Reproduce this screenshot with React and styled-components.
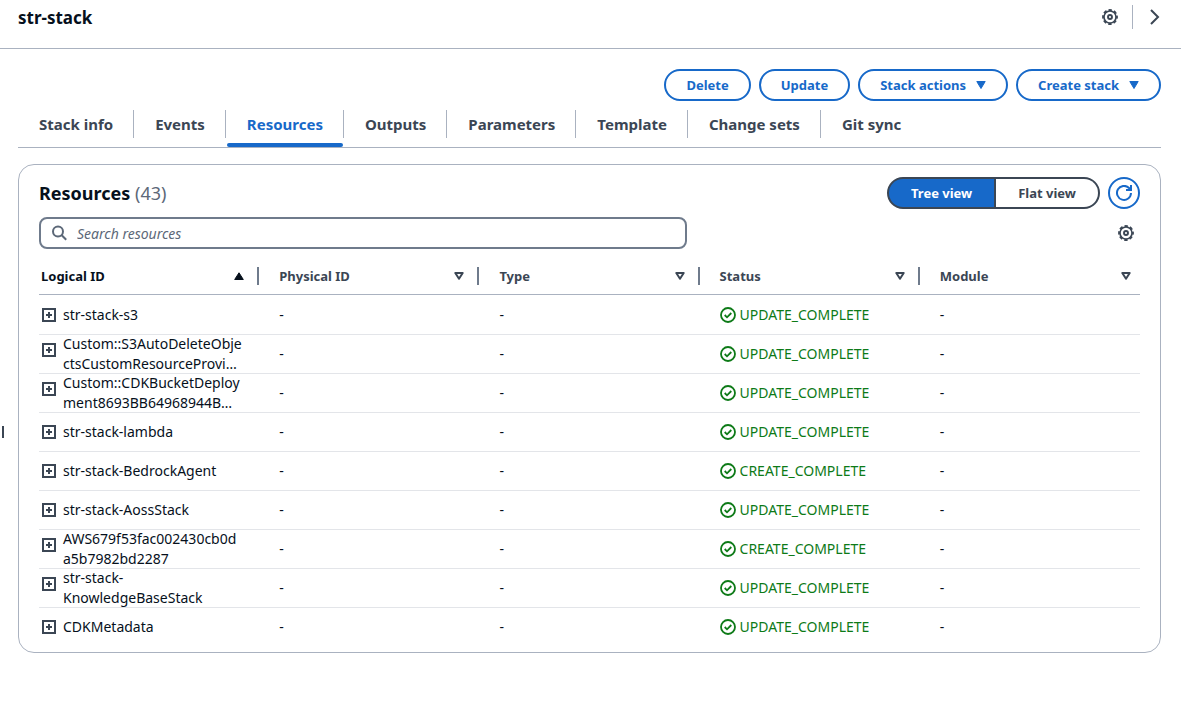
import { useState } from "react";
import styled, { createGlobalStyle } from "styled-components";

const Theme = {
  text: "#06101c",
  muted: "#3b4654",
  counter: "#5c6878",
  line: "#aab2c0",
  rowLine: "#e3e5e9",
  control: "#6f7b8c",
  blue: "#1769c9",
  green: "#0d7a17",
};

const GlobalStyle = createGlobalStyle`
  * {
    box-sizing: border-box;
  }

  body {
    margin: 0;
    background-color: #fff;
    color: ${Theme.text};
    font-family: "Noto Sans", "Open Sans", sans-serif;
    font-size: 14px;
    line-height: 20px;
  }

  button,
  input {
    font-family: inherit;
  }

  svg {
    display: block;
    flex-shrink: 0;
  }
`;

const TopBar = styled.header`
  display: flex;
  align-items: flex-start;
  justify-content: space-between;
  padding: 5px 18px 17px;
  border-bottom: 1px solid ${Theme.line};
`;

const StackName = styled.h1`
  margin: 0;
  font-size: 17px;
  font-weight: 700;
  line-height: 26px;
`;

const TopActions = styled.div`
  display: flex;
  align-items: center;
  gap: 14px;
`;

const TopDivider = styled.span`
  width: 1px;
  height: 24px;
  background-color: ${Theme.line};
`;

const IconButton = styled.button`
  display: flex;
  padding: 0;
  border: 0;
  background: none;
  color: ${Theme.muted};
  cursor: pointer;
`;

const PanelHandle = styled.span`
  position: fixed;
  top: 426px;
  left: 2px;
  width: 2px;
  height: 12px;
  background-color: ${Theme.muted};
`;

const Main = styled.main`
  padding: 20px 20px 20px 18px;
`;

const ButtonRow = styled.div`
  display: flex;
  justify-content: flex-end;
  gap: 8px;
`;

const Button = styled.button`
  display: flex;
  align-items: center;
  gap: 10px;
  height: 32px;
  padding: 0 20px;
  border: 2px solid ${Theme.blue};
  border-radius: 20px;
  background-color: #fff;
  color: ${Theme.blue};
  font-size: 13px;
  font-weight: 700;
  cursor: pointer;
`;

const Tabs = styled.div`
  display: flex;
  border-bottom: 1px solid ${Theme.line};
`;

const TabItem = styled.div`
  display: flex;
  align-items: center;

  & + &::before {
    content: "";
    width: 1px;
    height: 28px;
    background-color: ${Theme.line};
  }
`;

const Tab = styled.button`
  display: flex;
  flex-direction: column;
  height: 46px;
  padding: 0 0 0 1px;
  border: 0;
  background: none;
  color: ${({ $active }) => ($active ? Theme.blue : Theme.muted)};
  font-size: 15px;
  font-weight: 700;
  line-height: 20px;
  cursor: pointer;

  &::after {
    content: "";
    width: 100%;
    height: 4px;
    border-radius: 2px;
    background-color: ${({ $active }) => ($active ? Theme.blue : "transparent")};
  }
`;

const TabLabel = styled.span`
  flex: 1;
  padding: 13px 20px 0;
`;

const Panel = styled.section`
  margin-top: 16px;
  padding: 12px 20px 6px;
  border: 1px solid ${Theme.line};
  border-radius: 16px;
`;

const PanelHeader = styled.div`
  display: flex;
  align-items: center;
  justify-content: space-between;
`;

const PanelTitle = styled.h2`
  margin: 0;
  font-size: 18px;
  font-weight: 700;
  line-height: 24px;
`;

const Counter = styled.span`
  color: ${Theme.counter};
  font-weight: 400;
`;

const PanelActions = styled.div`
  display: flex;
  gap: 8px;
`;

const Segments = styled.div`
  display: flex;
  height: 32px;
  overflow: hidden;
  border: 2px solid ${Theme.muted};
  border-radius: 16px;
  background-color: ${Theme.muted};
`;

const Segment = styled.button`
  padding: 0 22px;
  border: 0;
  background-color: ${({ $active }) => ($active ? Theme.blue : "#fff")};
  color: ${({ $active }) => ($active ? "#fff" : Theme.muted)};
  font-size: 13px;
  font-weight: 700;
  cursor: pointer;

  & + & {
    border-left: 2px solid ${Theme.muted};
  }
`;

const RefreshButton = styled(IconButton)`
  align-items: center;
  justify-content: center;
  width: 32px;
  height: 32px;
  border: 2px solid ${Theme.blue};
  border-radius: 50%;
  color: ${Theme.blue};
`;

const Toolbar = styled.div`
  display: flex;
  align-items: center;
  justify-content: space-between;
  margin-top: 8px;
  padding-right: 6px;
`;

const SearchBox = styled.label`
  display: flex;
  flex: 0 1 648px;
  align-items: center;
  gap: 10px;
  height: 32px;
  padding: 0 10px;
  border: 2px solid ${Theme.control};
  border-radius: 8px;
  color: ${Theme.counter};
`;

const SearchInput = styled.input`
  flex: 1;
  min-width: 0;
  padding: 0;
  border: 0;
  outline: 0;
  background: none;
  color: ${Theme.text};
  font-size: 14px;

  &::placeholder {
    color: ${Theme.counter};
    font-style: italic;
    opacity: 1;
  }
`;

const Table = styled.table`
  width: 100%;
  margin-top: 8px;
  border-spacing: 0;
  table-layout: fixed;
`;

const HeadCell = styled.th`
  height: 38px;
  padding: 0 0 0 20px;
  border-bottom: 1px solid ${Theme.line};
  color: ${({ $sorted }) => ($sorted ? Theme.text : Theme.muted)};
  font-size: 13px;
  font-weight: 700;
  text-align: left;

  &:first-child {
    padding-left: 2px;
  }

  &:last-child {
    padding-right: 9px;
  }
`;

const HeadContent = styled.div`
  display: flex;
  align-items: center;
  gap: 13px;
`;

const HeadLabel = styled.span`
  flex: 1;
`;

const ColumnDivider = styled.span`
  width: 2px;
  height: 18px;
  background-color: ${Theme.control};
`;

const Row = styled.tr`
  &:first-child td {
    padding-top: 1px;
  }

  &:last-child td {
    border-bottom: 0;
  }
`;

const Cell = styled.td`
  padding: 0 0 0 20px;
  border-bottom: 1px solid ${Theme.rowLine};

  &:first-child {
    padding-left: 3px;
  }
`;

const StatusCell = styled(Cell)`
  color: ${Theme.green};
`;

const CellContent = styled.div`
  display: flex;
  align-items: center;
  gap: ${({ $gap }) => $gap}px;
  height: 38px;
`;

const ExpandButton = styled(IconButton)`
  align-items: center;
  align-self: ${({ $wrapped }) => ($wrapped ? "flex-start" : "center")};
  height: ${({ $wrapped }) => ($wrapped ? 30 : 20)}px;
`;

const LogicalId = styled.span`
  white-space: pre;
`;

const SettingsIcon = () => (
  <svg width="16" height="16" viewBox="0 0 16 16" fill="none" stroke="currentColor">
    <circle cx="8" cy="8" r="7" strokeWidth="1.800" strokeDasharray="3.400 2.098" strokeDashoffset="1.700" />
    <circle cx="8" cy="8" r="6" strokeWidth="1.600" />
    <circle cx="8" cy="8" r="2" strokeWidth="1.900" />
  </svg>
);

const ChevronIcon = () => (
  <svg width="16" height="16" viewBox="0 0 16 16" fill="none" stroke="currentColor" strokeWidth="2">
    <path d="M4 1l7 7-7 7" />
  </svg>
);

const CaretIcon = () => (
  <svg width="10" height="8" viewBox="0 0 10 8" fill="currentColor">
    <path d="M.8.500h8.400L5 7.500z" stroke="currentColor" strokeLinejoin="round" />
  </svg>
);

const RefreshIcon = () => (
  <svg width="16" height="16" viewBox="0 0 16 16" fill="none" stroke="currentColor" strokeWidth="2">
    <path d="M15 8a7 7 0 1 1-2-5l2 2" />
    <path d="M15 0v5h-5" />
  </svg>
);

const SearchIcon = () => (
  <svg width="16" height="16" viewBox="0 0 16 16" fill="none" stroke="currentColor" strokeWidth="2">
    <circle cx="7" cy="6.500" r="5" />
    <path d="M10.500 10l4.700 4.700" />
  </svg>
);

const SortIcon = ({ filled }) => (
  <svg width="10" height="8" viewBox="0 0 10 8" fill="none" stroke="currentColor">
    {filled ? (
      <path d="M5 .8L9.300 7.500H.7z" fill="currentColor" strokeLinejoin="round" />
    ) : (
      <path d="M1.300 1h7.400L5 6.700z" strokeWidth="2" strokeLinejoin="round" />
    )}
  </svg>
);

const ExpandIcon = () => (
  <svg width="14" height="14" viewBox="0 0 14 14" fill="none" stroke="currentColor" strokeWidth="2">
    <rect x="1" y="1" width="12" height="12" />
    <path d="M7 4v6M4 7h6" />
  </svg>
);

const SuccessIcon = () => (
  <svg width="16" height="16" viewBox="0 0 16 16" fill="none" stroke="currentColor" strokeWidth="1.800">
    <circle cx="8" cy="8" r="7" />
    <path d="M4.700 8l2.300 2.300 4.300-4.300" />
  </svg>
);

const tabs = [
  "Stack info",
  "Events",
  "Resources",
  "Outputs",
  "Parameters",
  "Template",
  "Change sets",
  "Git sync",
];

const columns = ["Logical ID", "Physical ID", "Type", "Status", "Module"];

const resources = [
  { id: "str-stack-s3", status: "UPDATE_COMPLETE" },
  { id: "Custom::S3AutoDeleteObje\nctsCustomResourceProvi…", status: "UPDATE_COMPLETE" },
  { id: "Custom::CDKBucketDeploy\nment8693BB64968944B…", status: "UPDATE_COMPLETE" },
  { id: "str-stack-lambda", status: "UPDATE_COMPLETE" },
  { id: "str-stack-BedrockAgent", status: "CREATE_COMPLETE" },
  { id: "str-stack-AossStack", status: "UPDATE_COMPLETE" },
  { id: "AWS679f53fac002430cb0d\na5b7982bd2287", status: "CREATE_COMPLETE" },
  { id: "str-stack-\nKnowledgeBaseStack", status: "UPDATE_COMPLETE" },
  { id: "CDKMetadata", status: "UPDATE_COMPLETE" },
];

const ResourceRow = ({ resource }) => (
  <Row>
    <Cell>
      <CellContent $gap={7}>
        <ExpandButton $wrapped={resource.id.includes("\n")} aria-label="Expand">
          <ExpandIcon />
        </ExpandButton>
        <LogicalId>{resource.id}</LogicalId>
      </CellContent>
    </Cell>
    <Cell>-</Cell>
    <Cell>-</Cell>
    <StatusCell>
      <CellContent $gap={4}>
        <SuccessIcon />
        {resource.status}
      </CellContent>
    </StatusCell>
    <Cell>-</Cell>
  </Row>
);

export default function App() {
  const [activeTab, setActiveTab] = useState("Resources");
  const [view, setView] = useState("Tree view");

  return (
    <>
      <GlobalStyle />
      <TopBar>
        <StackName>str-stack</StackName>
        <TopActions>
          <IconButton aria-label="Preferences">
            <SettingsIcon />
          </IconButton>
          <TopDivider />
          <IconButton aria-label="Close panel">
            <ChevronIcon />
          </IconButton>
        </TopActions>
      </TopBar>
      <PanelHandle />
      <Main>
        <ButtonRow>
          <Button>Delete</Button>
          <Button>Update</Button>
          <Button>
            Stack actions <CaretIcon />
          </Button>
          <Button>
            Create stack <CaretIcon />
          </Button>
        </ButtonRow>
        <Tabs role="tablist">
          {tabs.map((tab) => (
            <TabItem key={tab} role="presentation">
              <Tab
                role="tab"
                aria-selected={tab === activeTab}
                $active={tab === activeTab}
                onClick={() => setActiveTab(tab)}
              >
                <TabLabel>{tab}</TabLabel>
              </Tab>
            </TabItem>
          ))}
        </Tabs>
        <Panel>
          <PanelHeader>
            <PanelTitle>
              Resources <Counter>(43)</Counter>
            </PanelTitle>
            <PanelActions>
              <Segments>
                {["Tree view", "Flat view"].map((name) => (
                  <Segment key={name} $active={name === view} onClick={() => setView(name)}>
                    {name}
                  </Segment>
                ))}
              </Segments>
              <RefreshButton aria-label="Refresh">
                <RefreshIcon />
              </RefreshButton>
            </PanelActions>
          </PanelHeader>
          <Toolbar>
            <SearchBox>
              <SearchIcon />
              <SearchInput placeholder="Search resources" aria-label="Search resources" />
            </SearchBox>
            <IconButton aria-label="Table settings">
              <SettingsIcon />
            </IconButton>
          </Toolbar>
          <Table>
            <thead>
              <tr>
                {columns.map((column, i) => (
                  <HeadCell key={column} $sorted={i === 0}>
                    <HeadContent>
                      <HeadLabel>{column}</HeadLabel>
                      <SortIcon filled={i === 0} />
                      {i < columns.length - 1 && <ColumnDivider />}
                    </HeadContent>
                  </HeadCell>
                ))}
              </tr>
            </thead>
            <tbody>
              {resources.map((resource) => (
                <ResourceRow key={resource.id} resource={resource} />
              ))}
            </tbody>
          </Table>
        </Panel>
      </Main>
    </>
  );
}
